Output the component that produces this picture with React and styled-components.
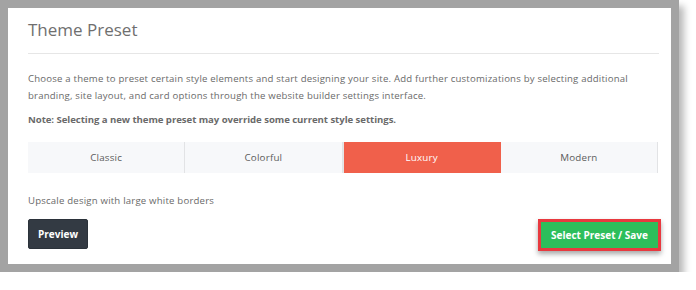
import React from "react";
import styled, { createGlobalStyle } from "styled-components";

const Global = createGlobalStyle`
  html, body { margin: 0; padding: 0; background: #ffffff; }
  body { font-family: "Open Sans", "Liberation Sans", sans-serif; }
`;

const Frame = styled.div`
  box-sizing: border-box;
  width: 679px;
  height: 272px;
  border: 8px solid #a3a3a3;
  background: #ffffff;
  box-shadow: 5px 6px 7px rgba(0, 0, 0, 0.28);
`;

const Card = styled.div`
  padding: 0 13px 0 20px;
  display: flex;
  flex-direction: column;
`;

const Title = styled.h2`
  margin: 0 -1px 0 0;
  padding: 10px 0 0 0;
  height: 35px;
  font-size: 17px;
  font-weight: 400;
  color: #6f6f6f;
  line-height: 24px;
  border-bottom: 1px solid #e6e6e6;
`;

const Text = styled.p`
  margin: ${(p) => p.$mt || 0}px 0 0 0;
  font-size: 9.6px;
  line-height: 17px;
  color: #6a6a6a;
  font-weight: ${(p) => (p.$bold ? 700 : 400)};
  letter-spacing: ${(p) => (p.$bold ? "-0.05px" : "0.2px")};
`;

const Tabs = styled.div`
  display: flex;
  margin-top: 14px;
  height: 31px;
`;

const Tab = styled.div`
  flex: 1;
  display: flex;
  align-items: center;
  justify-content: center;
  font-size: 9.8px;
  letter-spacing: 0.2px;
  background: ${(p) => (p.$active ? "#f0604b" : "#f7f8fa")};
  color: ${(p) => (p.$active ? "#ffffff" : "#5c5c5c")};
  border-right: 1px solid ${(p) => (p.$active ? "#f0604b" : "#e2e3e5")};
  border-left: ${(p) => (p.$active ? "1px solid #e6e6e6" : "none")};
`;

const Actions = styled.div`
  display: flex;
  justify-content: space-between;
  align-items: flex-start;
  margin-top: 10px;
`;

const PreviewButton = styled.button`
  width: 60px;
  height: 30px;
  border: 1px solid #2b323a;
  border-radius: 2px;
  background: #333a43;
  color: #ffffff;
  font-family: "Open Sans", "Liberation Sans", sans-serif;
  font-weight: 700;
  font-size: 10px;
  padding: 0;
`;

const SaveButton = styled.button`
  box-sizing: border-box;
  width: 123px;
  height: 32px;
  margin-right: -3px;
  border: 3px solid #e8393f;
  background: #2dbe5b;
  color: #ffffff;
  font-family: "Open Sans", "Liberation Sans", sans-serif;
  font-weight: 700;
  font-size: 10px;
  padding: 0;
  box-shadow: 0 3px 5px rgba(0, 0, 0, 0.35);
`;

const presets = ["Classic", "Colorful", "Luxury", "Modern"];

export default function App() {
  return (
    <>
      <Global />
      <Frame>
        <Card>
          <Title>Theme Preset</Title>
          <Text $mt={16}>
            Choose a theme to preset certain style elements and start designing your site. Add further customizations by selecting additional
            <br />
            branding, site layout, and card options through the website builder settings interface.
          </Text>
          <Text $mt={7} $bold>
            Note: Selecting a new theme preset may override some current style settings.
          </Text>
          <Tabs>
            {presets.map((p) => (
              <Tab key={p} $active={p === "Luxury"}>
                {p}
              </Tab>
            ))}
          </Tabs>
          <Text $mt={19}>Upscale design with large white borders</Text>
          <Actions>
            <PreviewButton>Preview</PreviewButton>
            <SaveButton>Select Preset / Save</SaveButton>
          </Actions>
        </Card>
      </Frame>
    </>
  );
}
